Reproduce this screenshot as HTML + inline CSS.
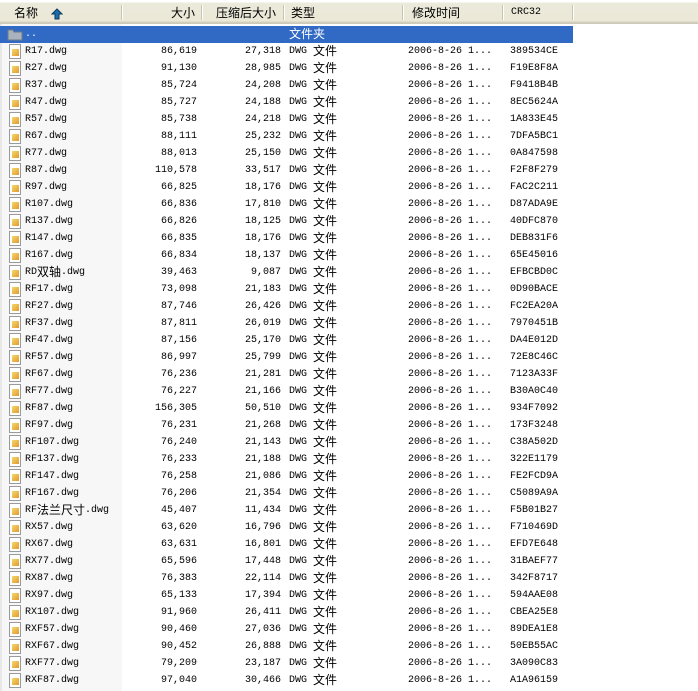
<!DOCTYPE html>
<html><head><meta charset="utf-8"><style>
*{margin:0;padding:0;box-sizing:border-box}
body{width:698px;height:691px;background:#fff;position:relative;overflow:hidden;font-family:"Liberation Mono","Noto Sans CJK SC",monospace;font-size:10px;color:#000}
.hdr{position:absolute;left:0;top:0;width:698px;height:24px;background:linear-gradient(#fff 0,#fff 2px,#ebeadb 3px,#ebe8d7 21px,#d6d2c2 22px,#cbc7b8 24px);}
.hc{position:absolute;top:5px;height:16px;font-family:"Liberation Sans","Noto Sans CJK SC",sans-serif;font-size:12px;line-height:16px;color:#000}
.dv{position:absolute;top:5px;width:1px;height:15px;background:#c7c5b2;box-shadow:1px 0 0 #fff}
.namecol{position:absolute;left:0;top:24px;width:122px;height:667px;background:#f7f7f7}
.leftb{position:absolute;left:0;top:24px;width:2px;height:667px;background:#e8e8e8}
.sel{position:absolute;left:0;top:26px;width:573px;height:17px;background:#316ac5}
.r{position:absolute;left:0;height:17px;width:698px;line-height:17px;white-space:nowrap}
.r span{position:absolute;top:0;height:17px;line-height:17px}
.n{left:25px}.s{right:501px;text-align:right}.c{right:417px;text-align:right}
.t{left:289px}.m{left:408px}.k{left:510px}
b{font-family:"Liberation Sans","Noto Sans CJK SC",sans-serif;font-size:12px;line-height:0;font-weight:normal;position:relative;top:2px}
.ic{position:absolute;left:9px;top:1px;width:12px;height:15px;background:#fff;border:1px solid #9a9a9a}
.ic:after{content:"";position:absolute;left:2px;top:4px;width:7px;height:7px;background:linear-gradient(135deg,#f6d86a,#e09a30)}
</style></head><body>
<div class="hdr"></div>
<div class="hc" style="left:14px">名称</div>
<svg style="position:absolute;left:51px;top:8px" width="12" height="12" viewBox="0 0 12 12"><path d="M6 1 L11 6 L8 6 L8 11 L4 11 L4 6 L1 6 Z" fill="#1a6fae" stroke="#0d3a5c" stroke-width="1"/></svg>
<div class="dv" style="left:121px"></div>
<div class="hc" style="left:171px">大小</div>
<div class="dv" style="left:201px"></div>
<div class="hc" style="left:216px">压缩后大小</div>
<div class="dv" style="left:283px"></div>
<div class="hc" style="left:291px">类型</div>
<div class="dv" style="left:402px"></div>
<div class="hc" style="left:412px">修改时间</div>
<div class="dv" style="left:502px"></div>
<div class="hc" style="left:511px;font-family:'Liberation Mono',monospace;font-size:10px">CRC32</div>
<div class="dv" style="left:572px"></div>
<div class="namecol"></div>
<div class="leftb"></div>
<div class="sel"></div>
<svg style="position:absolute;left:7px;top:28px" width="16" height="13" viewBox="0 0 16 13"><path d="M1 2 L6 2 L7 4 L15 4 L15 12 L1 12 Z" fill="#a9b2bd" stroke="#6e7a86"/></svg>
<div class="r" style="top:26px;color:#fff"><span style="left:25px">..</span><span class="t"><b>文件夹</b></span></div>

<div class="r" style="top:43px"><i class="ic"></i><span class="n">R17.dwg</span><span class="s">86,619</span><span class="c">27,318</span><span class="t">DWG <b>文件</b></span><span class="m">2006-8-26 1...</span><span class="k">389534CE</span></div>
<div class="r" style="top:60px"><i class="ic"></i><span class="n">R27.dwg</span><span class="s">91,130</span><span class="c">28,985</span><span class="t">DWG <b>文件</b></span><span class="m">2006-8-26 1...</span><span class="k">F19E8F8A</span></div>
<div class="r" style="top:77px"><i class="ic"></i><span class="n">R37.dwg</span><span class="s">85,724</span><span class="c">24,208</span><span class="t">DWG <b>文件</b></span><span class="m">2006-8-26 1...</span><span class="k">F9418B4B</span></div>
<div class="r" style="top:94px"><i class="ic"></i><span class="n">R47.dwg</span><span class="s">85,727</span><span class="c">24,188</span><span class="t">DWG <b>文件</b></span><span class="m">2006-8-26 1...</span><span class="k">8EC5624A</span></div>
<div class="r" style="top:111px"><i class="ic"></i><span class="n">R57.dwg</span><span class="s">85,738</span><span class="c">24,218</span><span class="t">DWG <b>文件</b></span><span class="m">2006-8-26 1...</span><span class="k">1A833E45</span></div>
<div class="r" style="top:128px"><i class="ic"></i><span class="n">R67.dwg</span><span class="s">88,111</span><span class="c">25,232</span><span class="t">DWG <b>文件</b></span><span class="m">2006-8-26 1...</span><span class="k">7DFA5BC1</span></div>
<div class="r" style="top:145px"><i class="ic"></i><span class="n">R77.dwg</span><span class="s">88,013</span><span class="c">25,150</span><span class="t">DWG <b>文件</b></span><span class="m">2006-8-26 1...</span><span class="k">0A847598</span></div>
<div class="r" style="top:162px"><i class="ic"></i><span class="n">R87.dwg</span><span class="s">110,578</span><span class="c">33,517</span><span class="t">DWG <b>文件</b></span><span class="m">2006-8-26 1...</span><span class="k">F2F8F279</span></div>
<div class="r" style="top:179px"><i class="ic"></i><span class="n">R97.dwg</span><span class="s">66,825</span><span class="c">18,176</span><span class="t">DWG <b>文件</b></span><span class="m">2006-8-26 1...</span><span class="k">FAC2C211</span></div>
<div class="r" style="top:196px"><i class="ic"></i><span class="n">R107.dwg</span><span class="s">66,836</span><span class="c">17,810</span><span class="t">DWG <b>文件</b></span><span class="m">2006-8-26 1...</span><span class="k">D87ADA9E</span></div>
<div class="r" style="top:213px"><i class="ic"></i><span class="n">R137.dwg</span><span class="s">66,826</span><span class="c">18,125</span><span class="t">DWG <b>文件</b></span><span class="m">2006-8-26 1...</span><span class="k">40DFC870</span></div>
<div class="r" style="top:230px"><i class="ic"></i><span class="n">R147.dwg</span><span class="s">66,835</span><span class="c">18,176</span><span class="t">DWG <b>文件</b></span><span class="m">2006-8-26 1...</span><span class="k">DEB831F6</span></div>
<div class="r" style="top:247px"><i class="ic"></i><span class="n">R167.dwg</span><span class="s">66,834</span><span class="c">18,137</span><span class="t">DWG <b>文件</b></span><span class="m">2006-8-26 1...</span><span class="k">65E45016</span></div>
<div class="r" style="top:264px"><i class="ic"></i><span class="n">RD<b>双轴</b>.dwg</span><span class="s">39,463</span><span class="c">9,087</span><span class="t">DWG <b>文件</b></span><span class="m">2006-8-26 1...</span><span class="k">EFBCBD0C</span></div>
<div class="r" style="top:281px"><i class="ic"></i><span class="n">RF17.dwg</span><span class="s">73,098</span><span class="c">21,183</span><span class="t">DWG <b>文件</b></span><span class="m">2006-8-26 1...</span><span class="k">0D90BACE</span></div>
<div class="r" style="top:298px"><i class="ic"></i><span class="n">RF27.dwg</span><span class="s">87,746</span><span class="c">26,426</span><span class="t">DWG <b>文件</b></span><span class="m">2006-8-26 1...</span><span class="k">FC2EA20A</span></div>
<div class="r" style="top:315px"><i class="ic"></i><span class="n">RF37.dwg</span><span class="s">87,811</span><span class="c">26,019</span><span class="t">DWG <b>文件</b></span><span class="m">2006-8-26 1...</span><span class="k">7970451B</span></div>
<div class="r" style="top:332px"><i class="ic"></i><span class="n">RF47.dwg</span><span class="s">87,156</span><span class="c">25,170</span><span class="t">DWG <b>文件</b></span><span class="m">2006-8-26 1...</span><span class="k">DA4E012D</span></div>
<div class="r" style="top:349px"><i class="ic"></i><span class="n">RF57.dwg</span><span class="s">86,997</span><span class="c">25,799</span><span class="t">DWG <b>文件</b></span><span class="m">2006-8-26 1...</span><span class="k">72E8C46C</span></div>
<div class="r" style="top:366px"><i class="ic"></i><span class="n">RF67.dwg</span><span class="s">76,236</span><span class="c">21,281</span><span class="t">DWG <b>文件</b></span><span class="m">2006-8-26 1...</span><span class="k">7123A33F</span></div>
<div class="r" style="top:383px"><i class="ic"></i><span class="n">RF77.dwg</span><span class="s">76,227</span><span class="c">21,166</span><span class="t">DWG <b>文件</b></span><span class="m">2006-8-26 1...</span><span class="k">B30A0C40</span></div>
<div class="r" style="top:400px"><i class="ic"></i><span class="n">RF87.dwg</span><span class="s">156,305</span><span class="c">50,510</span><span class="t">DWG <b>文件</b></span><span class="m">2006-8-26 1...</span><span class="k">934F7092</span></div>
<div class="r" style="top:417px"><i class="ic"></i><span class="n">RF97.dwg</span><span class="s">76,231</span><span class="c">21,268</span><span class="t">DWG <b>文件</b></span><span class="m">2006-8-26 1...</span><span class="k">173F3248</span></div>
<div class="r" style="top:434px"><i class="ic"></i><span class="n">RF107.dwg</span><span class="s">76,240</span><span class="c">21,143</span><span class="t">DWG <b>文件</b></span><span class="m">2006-8-26 1...</span><span class="k">C38A502D</span></div>
<div class="r" style="top:451px"><i class="ic"></i><span class="n">RF137.dwg</span><span class="s">76,233</span><span class="c">21,188</span><span class="t">DWG <b>文件</b></span><span class="m">2006-8-26 1...</span><span class="k">322E1179</span></div>
<div class="r" style="top:468px"><i class="ic"></i><span class="n">RF147.dwg</span><span class="s">76,258</span><span class="c">21,086</span><span class="t">DWG <b>文件</b></span><span class="m">2006-8-26 1...</span><span class="k">FE2FCD9A</span></div>
<div class="r" style="top:485px"><i class="ic"></i><span class="n">RF167.dwg</span><span class="s">76,206</span><span class="c">21,354</span><span class="t">DWG <b>文件</b></span><span class="m">2006-8-26 1...</span><span class="k">C5089A9A</span></div>
<div class="r" style="top:502px"><i class="ic"></i><span class="n">RF<b>法兰尺寸</b>.dwg</span><span class="s">45,407</span><span class="c">11,434</span><span class="t">DWG <b>文件</b></span><span class="m">2006-8-26 1...</span><span class="k">F5B01B27</span></div>
<div class="r" style="top:519px"><i class="ic"></i><span class="n">RX57.dwg</span><span class="s">63,620</span><span class="c">16,796</span><span class="t">DWG <b>文件</b></span><span class="m">2006-8-26 1...</span><span class="k">F710469D</span></div>
<div class="r" style="top:536px"><i class="ic"></i><span class="n">RX67.dwg</span><span class="s">63,631</span><span class="c">16,801</span><span class="t">DWG <b>文件</b></span><span class="m">2006-8-26 1...</span><span class="k">EFD7E648</span></div>
<div class="r" style="top:553px"><i class="ic"></i><span class="n">RX77.dwg</span><span class="s">65,596</span><span class="c">17,448</span><span class="t">DWG <b>文件</b></span><span class="m">2006-8-26 1...</span><span class="k">31BAEF77</span></div>
<div class="r" style="top:570px"><i class="ic"></i><span class="n">RX87.dwg</span><span class="s">76,383</span><span class="c">22,114</span><span class="t">DWG <b>文件</b></span><span class="m">2006-8-26 1...</span><span class="k">342F8717</span></div>
<div class="r" style="top:587px"><i class="ic"></i><span class="n">RX97.dwg</span><span class="s">65,133</span><span class="c">17,394</span><span class="t">DWG <b>文件</b></span><span class="m">2006-8-26 1...</span><span class="k">594AAE08</span></div>
<div class="r" style="top:604px"><i class="ic"></i><span class="n">RX107.dwg</span><span class="s">91,960</span><span class="c">26,411</span><span class="t">DWG <b>文件</b></span><span class="m">2006-8-26 1...</span><span class="k">CBEA25E8</span></div>
<div class="r" style="top:621px"><i class="ic"></i><span class="n">RXF57.dwg</span><span class="s">90,460</span><span class="c">27,036</span><span class="t">DWG <b>文件</b></span><span class="m">2006-8-26 1...</span><span class="k">89DEA1E8</span></div>
<div class="r" style="top:638px"><i class="ic"></i><span class="n">RXF67.dwg</span><span class="s">90,452</span><span class="c">26,888</span><span class="t">DWG <b>文件</b></span><span class="m">2006-8-26 1...</span><span class="k">50EB55AC</span></div>
<div class="r" style="top:655px"><i class="ic"></i><span class="n">RXF77.dwg</span><span class="s">79,209</span><span class="c">23,187</span><span class="t">DWG <b>文件</b></span><span class="m">2006-8-26 1...</span><span class="k">3A090C83</span></div>
<div class="r" style="top:672px"><i class="ic"></i><span class="n">RXF87.dwg</span><span class="s">97,040</span><span class="c">30,466</span><span class="t">DWG <b>文件</b></span><span class="m">2006-8-26 1...</span><span class="k">A1A96159</span></div>
</body></html>
